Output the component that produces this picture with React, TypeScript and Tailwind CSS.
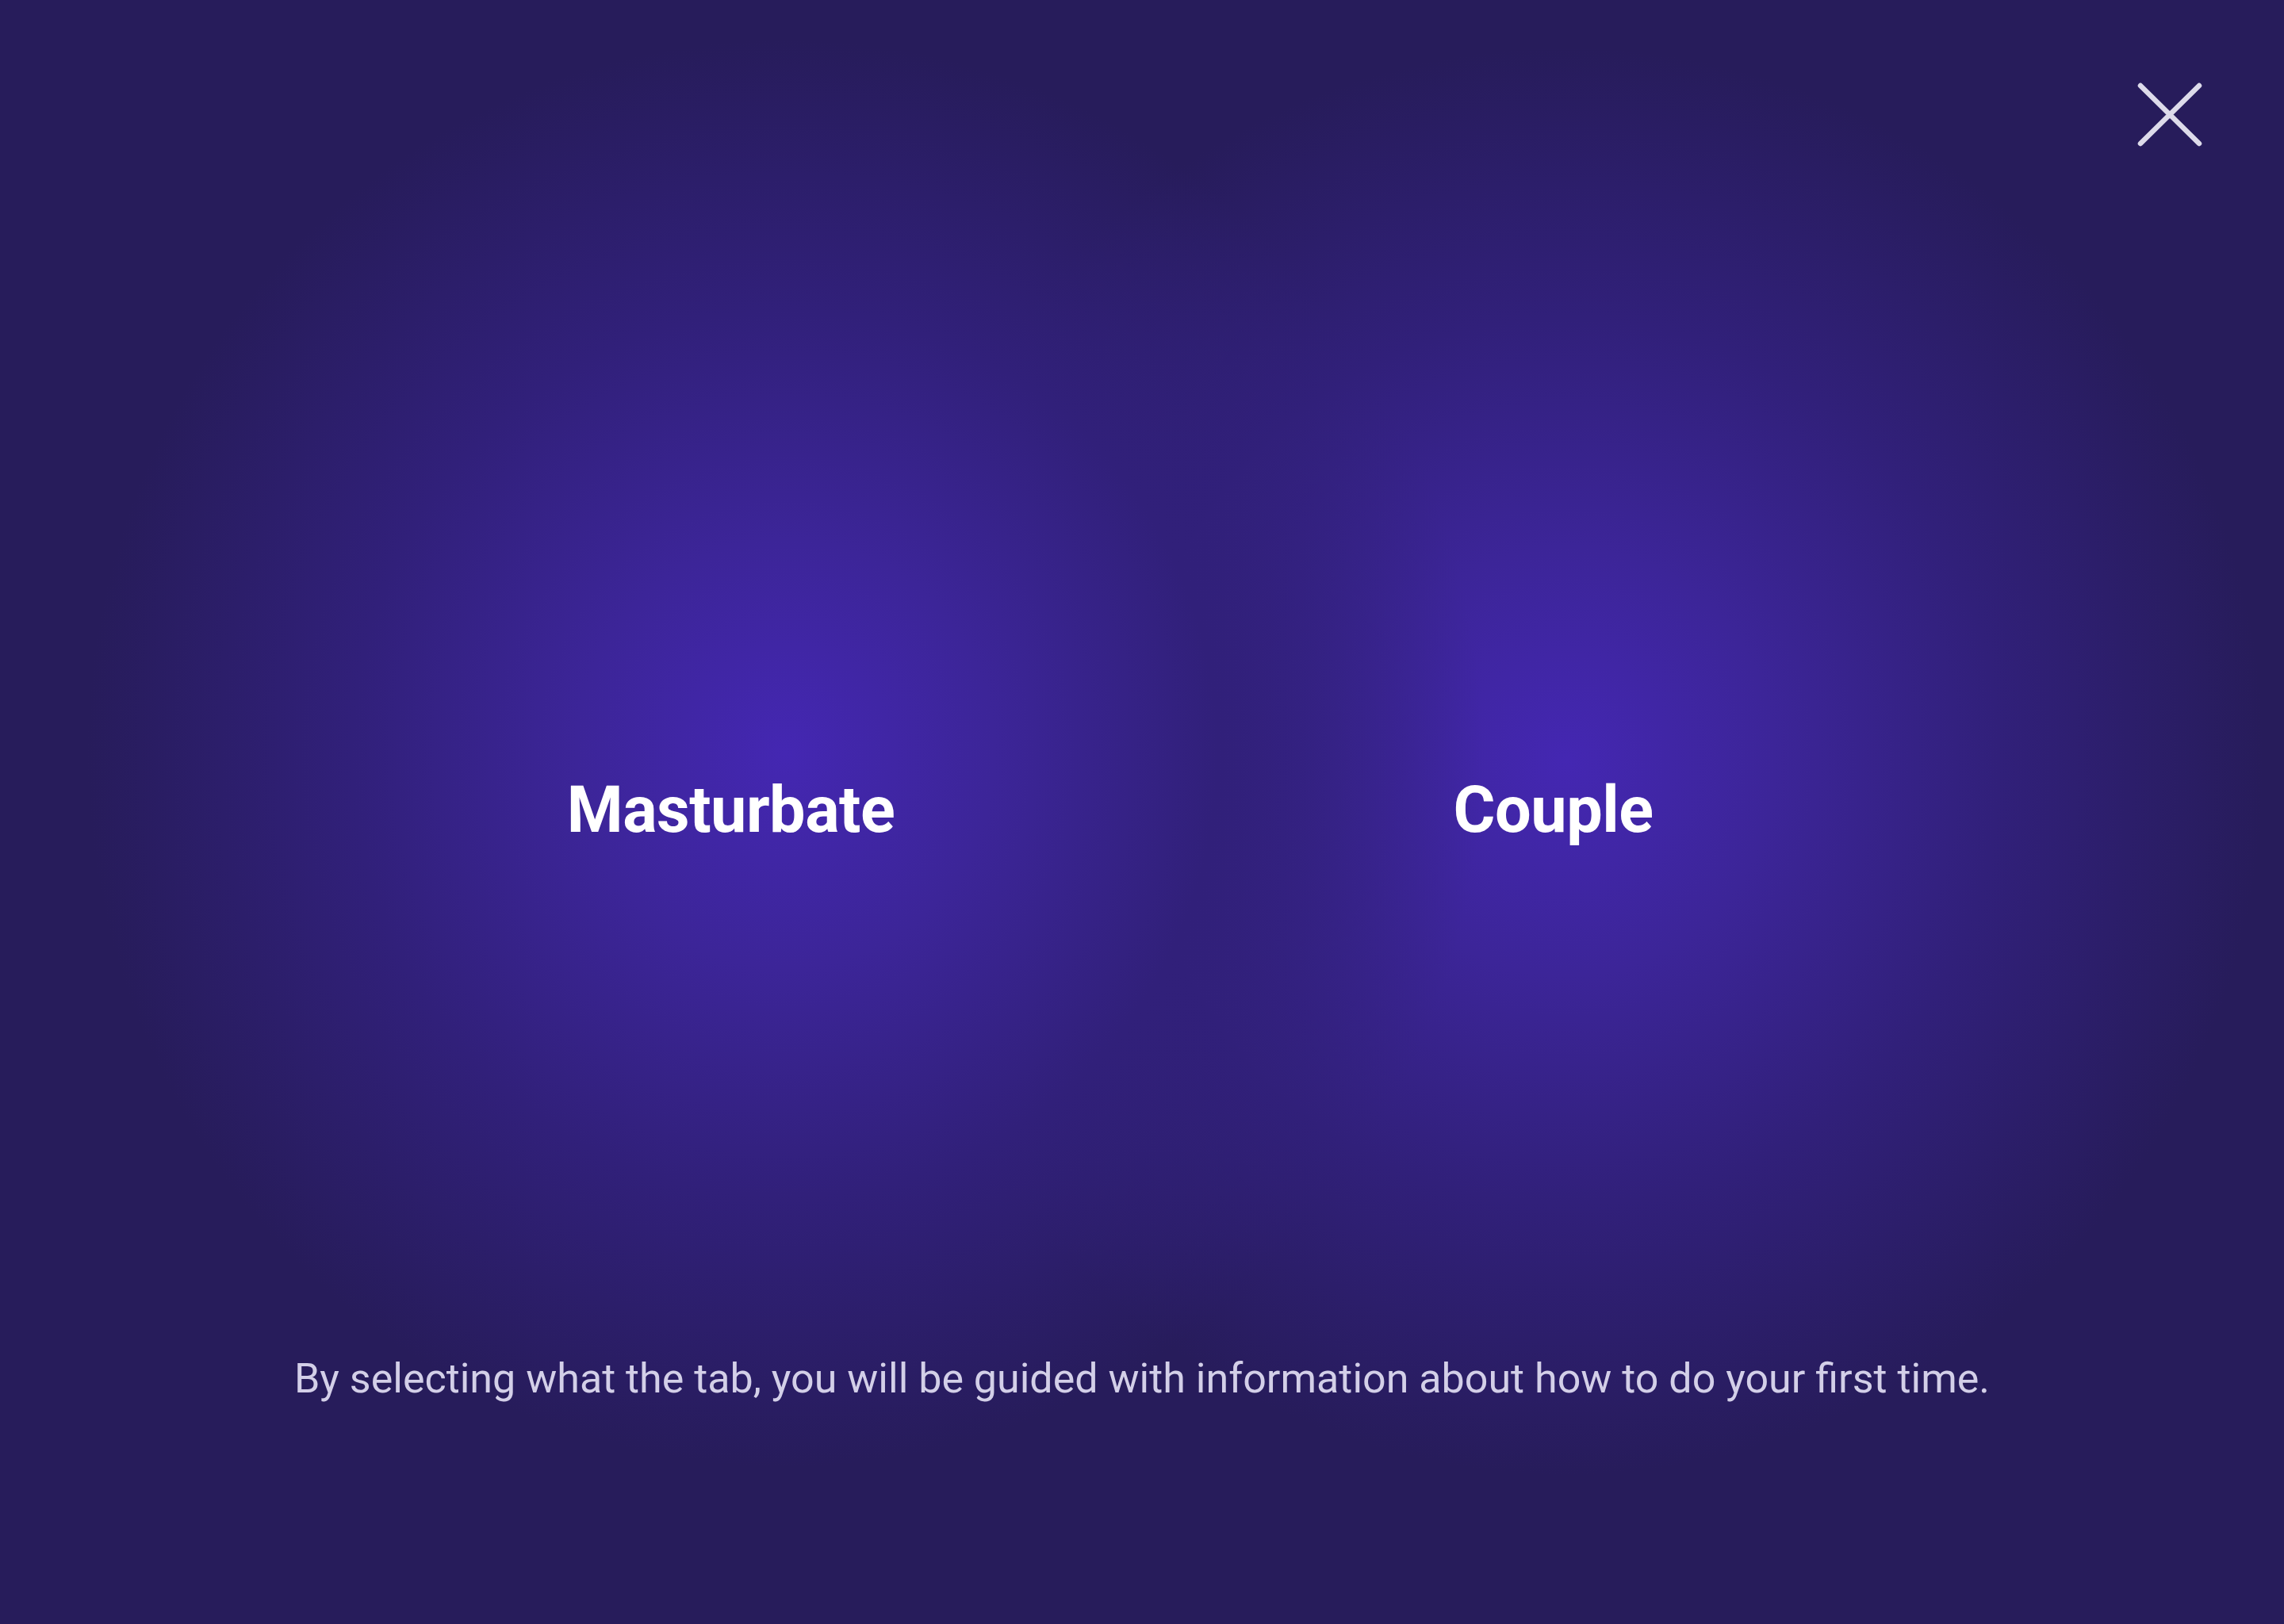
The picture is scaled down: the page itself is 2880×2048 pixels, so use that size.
import { X } from 'lucide-react';

const options = ['Masturbate', 'Couple'];

const App = () => {
  return (
    <div
      className="relative w-[2880px] h-[2048px] overflow-hidden bg-[#271c5b] font-['Roboto',sans-serif]"
    >
      {/* Glow behind the two tabs */}
      <div className="absolute inset-0 bg-[radial-gradient(ellipse_880px_900px_at_990px_950px,#4427b2_0%,#3c2598_30%,#31207a_62%,rgba(39,28,91,0)_100%),radial-gradient(ellipse_880px_900px_at_1975px_960px,#4427b2_0%,#3c2598_30%,#31207a_62%,rgba(39,28,91,0)_100%)]" />

      {/* Close */}
      <button className="absolute top-[100px] right-[100px] w-[90px] h-[90px] flex items-center justify-center">
        <svg width="90" height="90" viewBox="0 0 90 90" fill="none">
          <path
            d="M9 8 L83 81 M83 8 L9 81"
            stroke="#dddbea"
            strokeWidth="6.5"
            strokeLinecap="round"
          />
        </svg>
      </button>

      <div className="relative flex flex-col items-center h-full">
        {/* Tabs */}
        <div className="grid grid-cols-2 w-[2074px] mt-[962px]">
          {options.map((label) => (
            <div key={label} className="flex justify-center">
              <span className="text-[81px] leading-[120px] font-bold text-white tracking-[-0.5px]">
                {label}
              </span>
            </div>
          ))}
        </div>

        <p className="mt-[622px] text-[52px] leading-[70px] text-[#d3cfe8]">
          By selecting what the tab, you will be guided with information about how to do your first time.
        </p>
      </div>
    </div>
  );
};

export default App;
